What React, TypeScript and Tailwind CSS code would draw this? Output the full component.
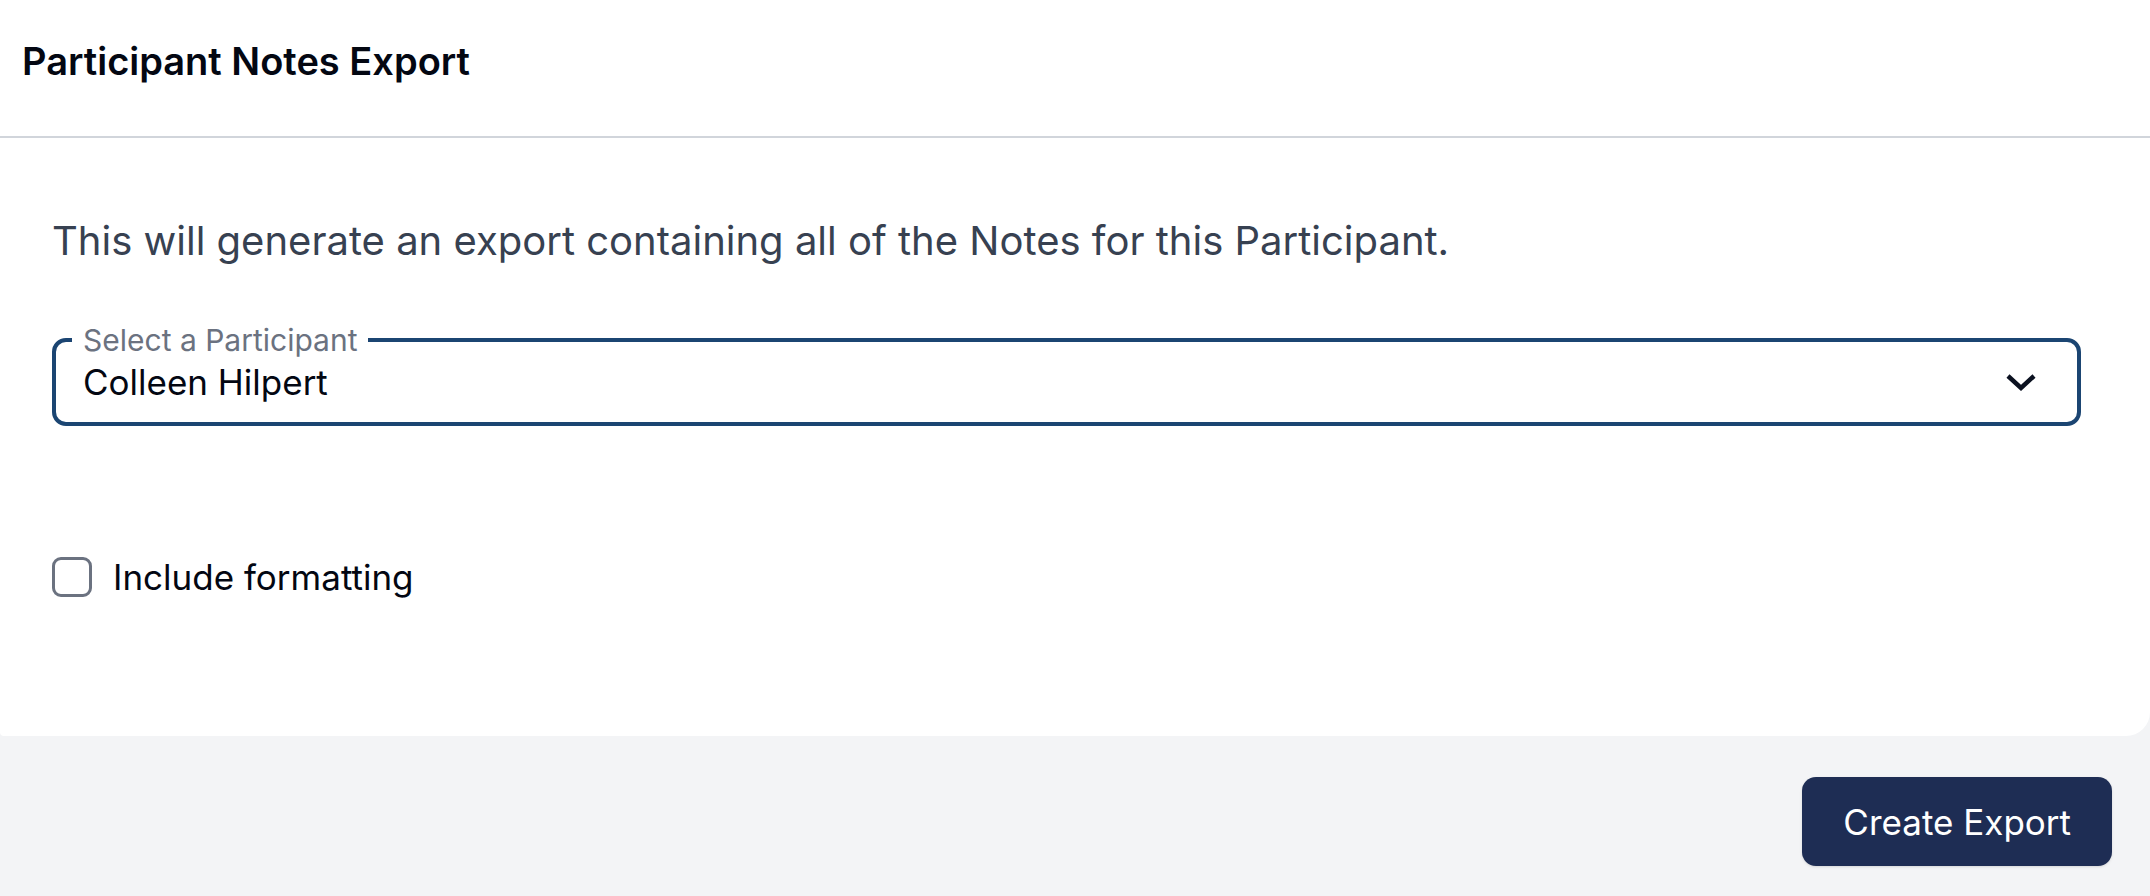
import { useState } from "react";

function Chevron() {
  return (
    <svg width="32" height="20" viewBox="0 0 32 20" fill="none" aria-hidden="true">
      <path d="M3 4 L16 16 L29 4" stroke="#0b1120" strokeWidth="4.5" strokeLinejoin="miter" />
    </svg>
  );
}

export default function App() {
  const [checked, setChecked] = useState(false);

  return (
    <div className="flex min-h-[896px] w-full flex-col bg-[#f3f4f6] font-['Inter',sans-serif]">
      <section className="flex flex-col rounded-br-[24px] rounded-bl-[4px] bg-white">
        <header className="h-[138px] border-b-2 border-[#d1d5db] px-[22px] pt-[33px]">
          <h1 className="text-[38px] font-semibold leading-[56px] text-[#030712]">
            Participant Notes Export
          </h1>
        </header>

        <div className="flex flex-col pt-[75px] pb-[135px] pl-[52px] pr-[69px]">
          <p className="text-[40px] leading-[56px] text-[#374151]">
            This will generate an export containing all of the Notes for this Participant.
          </p>

          <div className="relative mt-[69px] flex h-[88px] items-center justify-between rounded-[14px] border-4 border-[#1b4572] pl-[27px] pr-[40px]">
            <span className="absolute left-[16px] top-[-2px] -translate-y-1/2 bg-white px-[11px] text-[30px] leading-[36px] text-[#6b7280]">
              Select a Participant
            </span>
            <span className="text-[35px] leading-[48px] text-[#030712]">Colleen Hilpert</span>
            <Chevron />
          </div>

          <label className="mt-[127px] flex cursor-pointer items-center gap-[21px]">
            <input
              type="checkbox"
              checked={checked}
              onChange={(e) => setChecked(e.target.checked)}
              className="h-[40px] w-[40px] appearance-none rounded-[9px] border-[3px] border-[#6b7280] bg-white"
            />
            <span className="text-[35px] leading-[48px] text-[#030712]">Include formatting</span>
          </label>
        </div>
      </section>

      <div className="flex justify-end pt-[41px] pr-[38px]">
        <button className="h-[89px] rounded-[14px] bg-[#1e2d54] px-[41px] text-[35px] leading-[48px] text-white shadow-sm">
          Create Export
        </button>
      </div>
    </div>
  );
}
